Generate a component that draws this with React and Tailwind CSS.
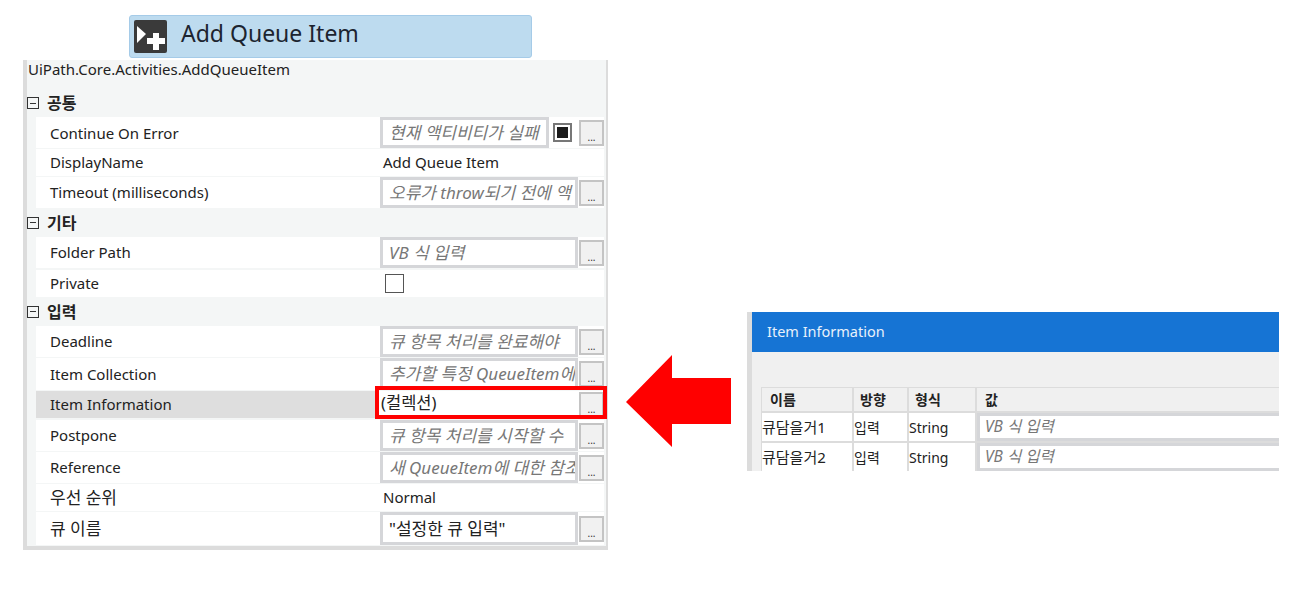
const font = { fontFamily: '"Noto Sans", "Noto Sans CJK KR", sans-serif' };

function DotsButton({ className = "" }) {
  return (
    <div className={`w-[25px] h-[26px] shrink-0 bg-[#f1f1f1] border-2 border-[#c4c4c4] flex items-end justify-center text-[10px] leading-[14px] text-[#333] ${className}`}>
      ...
    </div>
  );
}

function ExprInput({ text, filled, width = "w-[198px]" }) {
  return (
    <div className={`${width} h-full shrink-0 bg-white border-[3px] border-[#d5d6d9] flex items-center pl-[6px] overflow-hidden whitespace-nowrap text-[17px] ${filled ? "text-[#222]" : "text-[#777] italic"}`}>
      {text}
    </div>
  );
}

function Row({ label, h, mb = 1, active, children }) {
  return (
    <div className={`flex ${h} items-stretch`} style={{ marginBottom: mb }}>
      <div className={`w-[343px] flex items-center pl-[14px] text-[15px] text-[#222] ${active ? "bg-[#dedede]" : "bg-white"}`}>{label}</div>
      <div className="flex-1 bg-white flex items-center pl-[1px] text-[15px] text-[#222]">{children}</div>
    </div>
  );
}

function InputRow({ label, text, h = "h-[31px]", mb, filled }) {
  return (
    <Row label={label} h={h} mb={mb}>
      <ExprInput text={text} filled={filled} />
      <DotsButton className="ml-[1px]" />
    </Row>
  );
}

function Group({ label, h = "h-[29px]" }) {
  return (
    <div className={`${h} -ml-[9px] flex items-center gap-[8px] text-[16px] font-bold text-[#222]`}>
      <span className="w-[12px] h-[12px] border border-[#333] flex items-center justify-center">
        <span className="w-[6px] h-[1px] bg-[#333]" />
      </span>
      {label}
    </div>
  );
}

export default function App() {
  return (
    <div className="w-[1297px] h-[595px] bg-white flex overflow-hidden" style={font}>
      {/* left: activity + properties */}
      <div className="ml-[23px] mt-[15px] w-[585px] shrink-0">
        <div className="ml-[106px] w-[403px] h-[43px] bg-[#bddbef] border border-[#a5cbe8] rounded-[3px] flex items-center pl-[4px] gap-[14px]">
          <div className="w-[33px] h-[33px] bg-[#3a3a3a] rounded-[2px] shrink-0">
            <svg width="33" height="33" viewBox="0 0 33 33" className="block">
              <path d="M3 6 L12 14 L3 23 Z" fill="#fff" />
              <path d="M19 13 h6 v5 h6 v6 h-6 v6 h-6 v-6 h-6 v-6 h6 z" fill="#fff" />
            </svg>
          </div>
          <span className="text-[23px] text-[#1c2430] pb-[6px]">Add Queue Item</span>
        </div>

        <div className="mt-[2px] h-[490px] bg-[#f4f6f6] border-l-[4px] border-r-[2px] border-b-[4px] border-[#dcdcdc] pl-[9px] pr-[2px]">
          <div className="h-[29px] pb-[10px] -ml-[9px] pl-[1px] flex items-center text-[15px] text-[#222]">UiPath.Core.Activities.AddQueueItem</div>
          <Group label="공통" h="h-[28px]" />
          <Row label={<span className="pt-[2px]">Continue On Error</span>} h="h-[31px]">
            <ExprInput text="현재 액티비티가 실패" width="w-[169px]" />
            <div className="ml-[4px] w-[19px] h-[19px] border-2 border-[#777] flex items-center justify-center">
              <span className="w-[11px] h-[11px] bg-[#1c1c1c]" />
            </div>
            <DotsButton className="ml-[7px]" />
          </Row>
          <Row label="DisplayName" h="h-[27px]"><span className="pl-[3px]">Add Queue Item</span></Row>
          <InputRow label="Timeout (milliseconds)" text="오류가 throw되기 전에 액" mb={0} />
          <Group label="기타" />
          <InputRow label="Folder Path" text="VB 식 입력" mb={2} />
          <Row label="Private" h="h-[27px]" mb={0}>
            <span className="ml-[5px] w-[19px] h-[19px] border border-[#555] bg-white" />
          </Row>
          <Group label="입력" h="h-[29px]" />
          <InputRow label="Deadline" text="큐 항목 처리를 완료해야 " />
          <InputRow label="Item Collection" text="추가할 특정 QueueItem에" h="h-[32px]" />
          <div className="relative">
            <Row label="Item Information" h="h-[27px]" mb={2} active>
              <span className="pl-[1px] -mt-[3px] text-[16.5px]">(컬렉션)</span>
              <DotsButton className="ml-auto" />
            </Row>
            <div className="absolute left-[339px] -top-[5px] w-[232px] h-[33px] border-[4px] border-[#ff0000]" />
          </div>
          <InputRow label="Postpone" text="큐 항목 처리를 시작할 수" />
          <InputRow label="Reference" text="새 QueueItem에 대한 참조" />
          <Row label={<span className="text-[17px]">우선 순위</span>} h="h-[27px]"><span className="pl-[3px]">Normal</span></Row>
          <InputRow label={<span className="text-[17px]">큐 이름</span>} text={'"설정한 큐 입력"'} h="h-[33px]" filled />
        </div>
      </div>

      {/* arrow */}
      <div className="ml-[18px] mt-[355px] shrink-0">
        <svg width="106" height="92" viewBox="0 0 106 92" className="block">
          <path d="M0 47 L46 0 V23 H105 V69 H46 V92 Z" fill="#ff0000" />
        </svg>
      </div>

      {/* right: item information dialog */}
      <div className="ml-[15px] mt-[312px] w-[532px] h-[159px] shrink-0 border-l-[5px] border-[#dcdcdc] bg-[#f0f0f0] flex flex-col overflow-hidden">
        <div className="h-[40px] shrink-0 bg-[#1674d4] flex items-center pl-[15px] text-[14.5px] text-[#e8f1fb]">Item Information</div>
        <div className="h-[35px] shrink-0" />
        <div className="ml-[9px] flex flex-col text-[14px] text-[#222] bg-[#dcdcdc] gap-[2px] pt-[1px] pl-[1px]">
          <div className="flex h-[23px] font-bold gap-[2px]">
            <div className="w-[90px] bg-[#f0f0f0] pl-[8px] flex items-center">이름</div>
            <div className="w-[53px] bg-[#f0f0f0] pl-[6px] flex items-center">방향</div>
            <div className="w-[66px] bg-[#f0f0f0] pl-[6px] flex items-center">형식</div>
            <div className="flex-1 bg-[#f0f0f0] pl-[8px] flex items-center">값</div>
          </div>
          {["큐담을거1", "큐담을거2"].map((name) => (
            <div key={name} className="flex h-[28px] gap-[2px]">
              <div className="w-[90px] bg-white flex items-center text-[15px]">{name}</div>
              <div className="w-[53px] bg-white flex items-center">입력</div>
              <div className="w-[66px] bg-white flex items-center">String</div>
              <div className="flex-1 bg-white border-l-[3px] border-y-[3px] border-[#d5d6d9] pl-[5px] flex items-center italic text-[15.5px] text-[#777]">VB 식 입력</div>
            </div>
          ))}
        </div>
      </div>
    </div>
  );
}
